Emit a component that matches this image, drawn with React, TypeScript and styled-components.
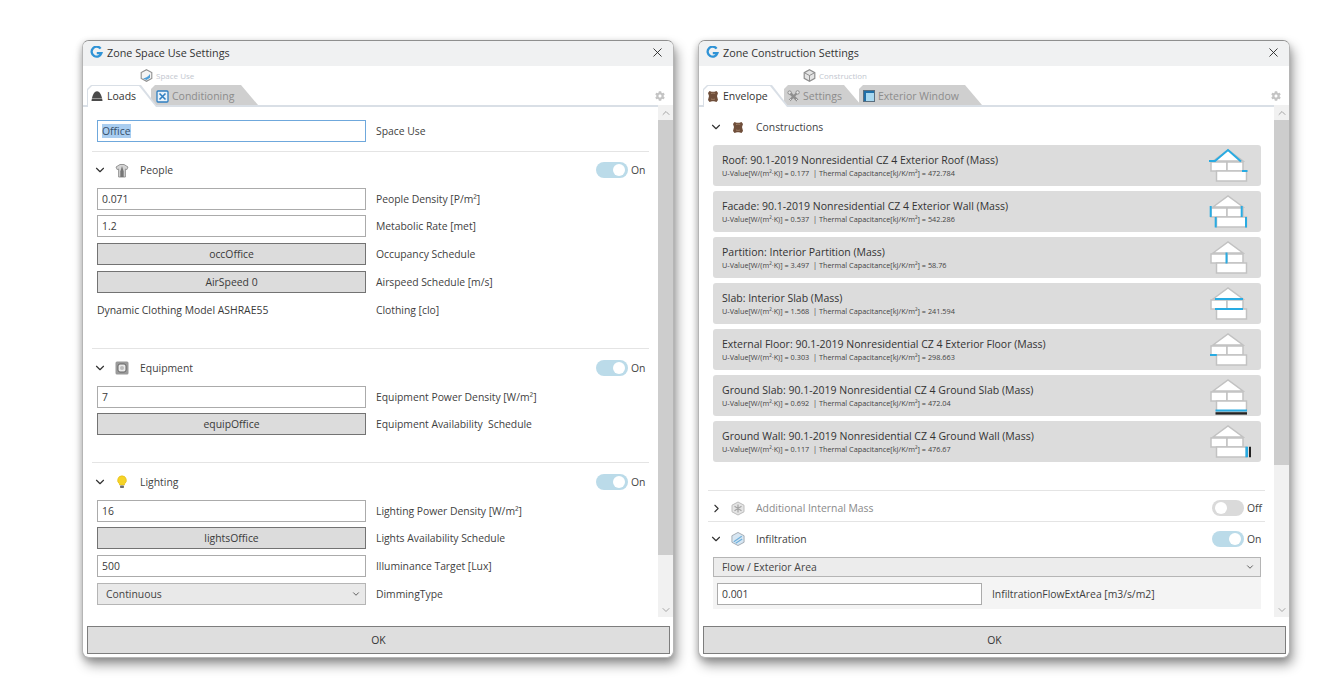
import React from "react";
import styled, { createGlobalStyle } from "styled-components";
import { ChevronDown, ChevronRight, ChevronUp, X } from "lucide-react";
import { FaCog } from "react-icons/fa";

const Global = createGlobalStyle`
  html, body { margin: 0; padding: 0; background: #fff; overflow: hidden; }
  body { font-family: "Open Sans", "Noto Sans", sans-serif; font-size: 10.4px; color: #3a3a3a; }
`;

const Page = styled.div`
  display: flex;
  gap: 24px;
  padding: 40px 0 0 82px;
  height: 656px;
`;
const Win = styled.section`
  width: 592px;
  height: 618px;
  box-sizing: border-box;
  display: flex;
  flex-direction: column;
  background: #fff;
  border: 1px solid #b5b5b5;
  border-top-color: #8f8f8f;
  border-radius: 7px;
  overflow: hidden;
  box-shadow: 3px 7px 12px rgba(0, 0, 0, 0.38), -1px 2px 6px rgba(0, 0, 0, 0.18);
`;
const TitleBar = styled.header`
  height: 25px;
  flex: none;
  display: flex;
  align-items: center;
  gap: 4px;
  padding: 0 8px 2px 7px;
  box-sizing: border-box;
  background: #f0f1f2;
  color: #333;
  font-size: 10.8px;
`;
const CloseBtn = styled.span`
  margin-left: auto;
  display: flex;
  color: #222;
`;
const Strip = styled.div`
  height: 39px;
  flex: none;
  box-sizing: border-box;
  display: flex;
  flex-direction: column;
`;
const Caption = styled.div<{ $left: number }>`
  height: 19px;
  flex: none;
  display: flex;
  align-items: center;
  gap: 3px;
  padding: 0 0 0 ${(p) => p.$left}px;
  box-sizing: border-box;
  font-size: 8px;
  color: #c3c7cf;
`;
const TabRow = styled.div`
  height: 20px;
  display: flex;
  padding: 0 8px 0 4px;
  border-bottom: 2px solid #d9dfe6;
  align-items: flex-start;
`;
const Tab = styled.div<{ $w: number; $active?: boolean; $overlap?: number; $pad: number }>`
  position: relative;
  width: ${(p) => p.$w}px;
  height: 20px;
  box-sizing: border-box;
  margin-left: ${(p) => -(p.$overlap ?? 0)}px;
  padding: 2px 0 0 ${(p) => p.$pad}px;
  display: flex;
  align-items: center;
  gap: ${(p) => (p.$active ? 4 : 3)}px;
  font-size: 10.5px;
  color: ${(p) => (p.$active ? "#333" : "#8c8c8c")};
  z-index: ${(p) => (p.$active ? 2 : 1)};
  isolation: isolate;
  &::before {
    content: "";
    position: absolute;
    inset: 0 0 ${(p) => (p.$active ? -2 : 0)}px 0;
    z-index: -1;
    background: ${(p) => (p.$active ? "#d9dfe6" : "#cfcfcf")};
    clip-path: polygon(0 100%, 0 4px, 4px 0, calc(100% - 17px) 0, 100% 100%);
  }
  &::after {
    content: "";
    display: ${(p) => (p.$active ? "block" : "none")};
    position: absolute;
    inset: 1px 1px -2px 1px;
    z-index: -1;
    background: #fff;
    clip-path: polygon(0 100%, 0 4px, 4px 0, calc(100% - 18px) 0, calc(100% - 1px) 100%);
  }
`;
const GearSlot = styled.span`
  margin-left: auto;
  display: flex;
  align-self: center;
  color: #c4c4c4;
  padding-top: 1px;
`;
const Body = styled.div`
  flex: 1;
  display: flex;
  min-height: 0;
`;
const Content = styled.div`
  flex: 1;
  min-width: 0;
  box-sizing: border-box;
  padding: 0 13px 0 14px;
  display: flex;
  flex-direction: column;
`;
const Scroll = styled.div`
  width: 15px;
  flex: none;
  display: flex;
  flex-direction: column;
  background: #f1f1f1;
  color: #a5a5a5;
`;
const ScrollEnd = styled.div<{ $bottom?: boolean }>`
  height: 15px;
  flex: none;
  display: flex;
  align-items: center;
  justify-content: center;
  margin-top: ${(p) => (p.$bottom ? "auto" : "0")};
`;
const Thumb = styled.div<{ $h: number }>`
  height: ${(p) => p.$h}px;
  flex: none;
  background: #cdcdcd;
`;
const Footer = styled.footer`
  height: 40px;
  flex: none;
  box-sizing: border-box;
  padding: 9px 3px 3px 4px;
  display: flex;
`;
const OkButton = styled.button`
  flex: 1;
  margin: 0;
  padding: 0;
  background: #dedede;
  border: 1.5px solid #7d7d7d;
  font: inherit;
  color: #333;
`;
const Row = styled.div<{ $top?: number }>`
  display: flex;
  align-items: center;
  gap: 10px;
  height: 22px;
  flex: none;
  margin-top: ${(p) => p.$top ?? 6}px;
`;
const FieldBase = styled.div<{ $w?: number }>`
  width: ${(p) => p.$w ?? 269}px;
  height: 22px;
  flex: none;
  box-sizing: border-box;
  display: flex;
  align-items: center;
  padding: 0 4px;
  color: #3a3a3a;
`;
const Field = styled(FieldBase)<{ $focus?: boolean }>`
  background: #fff;
  border: 1px solid ${(p) => (p.$focus ? "#6fa8dc" : "#ababab")};
`;
const Selected = styled.span`
  background: #a9cdf0;
  color: #37506b;
`;
const SchedBtn = styled(FieldBase)`
  justify-content: center;
  background: #dcdcdc;
  border: 1px solid #737373;
`;
const PlainText = styled(FieldBase)`
  padding: 0;
`;
const Combo = styled(FieldBase)`
  background: #e9e9e9;
  border: 1px solid #b5b5b5;
  justify-content: space-between;
  padding: 0 4px 0 8px;
  color: #444;
`;
const WideCombo = styled(Combo)`
  width: 100%;
  height: 20px;
  padding: 0 5px 0 8px;
  margin-top: 8px;
  background: #ececec;
`;
const Label = styled.span`
  color: #3f3f3f;
  white-space: pre;
  letter-spacing: -0.03px;
`;
const Sep = styled.div<{ $top: number }>`
  height: 1px;
  flex: none;
  margin: ${(p) => p.$top}px -4px 0 -5px;
  background: #e4e4e4;
`;
const SectionHead = styled.div<{ $top?: number; $muted?: boolean }>`
  height: 20px;
  flex: none;
  margin-top: ${(p) => p.$top ?? 8}px;
  display: flex;
  align-items: center;
  color: ${(p) => (p.$muted ? "#8a8a8a" : "#3f3f3f")};
`;
const Chevron = styled.span`
  width: 14px;
  margin-left: -4px;
  display: flex;
  justify-content: center;
  color: #333;
`;
const HeadIcon = styled.span`
  width: 14px;
  margin: 0 11px 0 8px;
  display: flex;
  justify-content: center;
`;
const ToggleWrap = styled.span`
  margin-left: auto;
  display: flex;
  align-items: center;
  gap: 3px;
  width: 49px;
  color: #444;
`;
const Track = styled.span<{ $on: boolean }>`
  width: 32px;
  height: 16px;
  border-radius: 8px;
  flex: none;
  box-sizing: border-box;
  padding: 2px 3px;
  display: flex;
  justify-content: ${(p) => (p.$on ? "flex-end" : "flex-start")};
  background: ${(p) => (p.$on ? "#bbdbe9" : "#dadada")};
`;
const Knob = styled.span`
  width: 12px;
  height: 12px;
  border-radius: 50%;
  background: #fff;
`;
const Cards = styled.div`
  display: flex;
  flex-direction: column;
  gap: 5px;
  margin-top: 8px;
`;
const Card = styled.div`
  height: 41px;
  flex: none;
  box-sizing: border-box;
  background: #dcdcdc;
  border-radius: 3px;
  padding: 0 12px 0 9px;
  display: flex;
  align-items: center;
  justify-content: space-between;
`;
const CardText = styled.div`
  display: flex;
  flex-direction: column;
  gap: 2px;
  margin-top: -1px;
`;
const CardTitle = styled.div`
  font-size: 10.5px;
  line-height: 14px;
  color: #333;
  white-space: nowrap;
`;
const CardSub = styled.div`
  font-size: 7.3px;
  line-height: 9px;
  color: #444;
  white-space: pre;
`;
const FlowPanel = styled.div`
  height: 32px;
  flex: none;
  box-sizing: border-box;
  background: #f4f4f4;
  padding: 6px 4px 4px;
  display: flex;
  align-items: center;
  gap: 10px;
`;
const HouseSvg = styled.svg`
  overflow: visible;
  flex: none;
`;

const Logo = () => (
  <svg width="13" height="13" viewBox="0 0 13 13">
    <path d="M10.6 2.6A5 5 0 1 0 11.4 7.2H6.8" fill="none" stroke="#2f93d6" strokeWidth="2.3" />
  </svg>
);
const HexBlue = () => (
  <svg width="13" height="13" viewBox="0 0 13 13">
    <path d="M6.5 .7 11.8 3.6V9.4L6.5 12.3 1.2 9.4V3.6Z" fill="#f4f4f4" stroke="#8f8f8f" strokeWidth="1.1" />
    <path d="M3 9.4C5 9.2 8 8 10 5V8.8L6.5 10.9Z" fill="#4f9fd8" />
  </svg>
);
const HexCube = () => (
  <svg width="13" height="13" viewBox="0 0 13 13">
    <path d="M6.5 .7 11.8 3.6V9.4L6.5 12.3 1.2 9.4V3.6Z" fill="#e4e4e4" stroke="#8f8f8f" strokeWidth="1.2" />
    <path d="M1.5 3.8 6.5 6.5 11.5 3.8M6.5 6.5V12" fill="none" stroke="#8f8f8f" />
  </svg>
);
const LoadsIcon = () => (
  <svg width="12" height="12" viewBox="0 0 12 12">
    <path d="M.5 11C1 6 3 1.2 6 1.2S11 6 11.5 11Z" fill="#4a4a4a" />
    <path d="M1 8.5H11" stroke="#aaa" strokeWidth=".8" />
  </svg>
);
const CondIcon = () => (
  <svg width="13" height="13" viewBox="0 0 13 13">
    <rect x="1" y="1" width="11" height="11" rx="1" fill="#e8f2fa" stroke="#2f7fc1" strokeWidth="1.3" />
    <path d="M3.5 3.5 9.5 9.5M9.5 3.5 3.5 9.5" stroke="#2f7fc1" strokeWidth="1.6" />
  </svg>
);
const HideIcon = () => (
  <svg width="12" height="13" viewBox="0 0 12 13">
    <path d="M2.5 1 4.5 1.8H7.5L9.5 1 11 3 10 6 11 10 9.5 12 7 11.2H5L2.5 12 1 10 2 6 1 3Z" fill="#6f4e3a" />
    <path d="M4 3.5C5.5 3 7 3 8.2 3.6M4 9C5.5 9.5 7 9.5 8 9" stroke="#a98a70" fill="none" strokeWidth=".8" />
  </svg>
);
const ToolsIcon = () => (
  <svg width="13" height="13" viewBox="0 0 13 13" fill="none" stroke="#8e8e8e">
    <path d="M2.5 2.5 10.5 10.5" strokeWidth="2.6" />
    <path d="M10.5 2.5 2.5 10.5" strokeWidth="2.2" />
    <circle cx="2.6" cy="2.6" r="1.7" fill="#e6e6e6" />
    <circle cx="10.6" cy="2.4" r="1.7" fill="#e6e6e6" />
    <path d="M2.2 10.8 4 9M9 9 10.8 10.8" stroke="#dedede" />
  </svg>
);
const WindowIcon = () => (
  <svg width="12" height="12" viewBox="0 0 12 12">
    <rect x=".5" y=".5" width="11" height="11" fill="#1f6fa8" stroke="#5a6f80" />
    <path d="M3 3H11V11H3Z" fill="#a8d8f0" />
  </svg>
);
const ShirtIcon = () => (
  <svg width="14" height="15" viewBox="0 0 14 15">
    <path d="M5 1.5H9L13 4 11.8 6.6 10.4 6V14H3.6V6L2.2 6.6 1 4Z" fill="#d4d4d4" stroke="#8d8d8d" strokeWidth=".9" />
    <path d="M5.3 8.5 7 3 8.7 8.5V14H5.3Z" fill="#777" />
  </svg>
);
const EquipIcon = () => (
  <svg width="14" height="14" viewBox="0 0 14 14">
    <rect x=".5" y=".5" width="13" height="13" rx="1.5" fill="#9a9a9a" />
    <rect x="3" y="3" width="8" height="8" rx="2" fill="#e9e9e9" stroke="#666" />
    <circle cx="7" cy="7" r="2" fill="#bbb" />
  </svg>
);
const BulbIcon = () => (
  <svg width="12" height="14" viewBox="0 0 12 14">
    <path d="M6 .8A4.4 4.4 0 0 1 8.5 8.8V10H3.5V8.8A4.4 4.4 0 0 1 6 .8Z" fill="#f5d327" stroke="#e2b90e" strokeWidth=".6" />
    <rect x="4" y="10.5" width="4" height="2.6" rx=".8" fill="#6e6e6e" />
  </svg>
);
const MassIcon = () => (
  <svg width="14" height="15" viewBox="0 0 14 15">
    <path d="M7 1 13 4.2V10.8L7 14 1 10.8V4.2Z" fill="#e4e4e4" stroke="#bdbdbd" />
    <path d="M7 3.5V11.5M3.5 5.2 10.5 9.8M10.5 5.2 3.5 9.8" stroke="#a5a5a5" strokeWidth="1.2" />
  </svg>
);
const InfilIcon = () => (
  <svg width="15" height="16" viewBox="0 0 15 16">
    <path d="M7.5 1 14 4.5V11.5L7.5 15 1 11.5V4.5Z" fill="#d7e6f2" stroke="#a0a8b0" />
    <path d="M3 11 11.5 5M5 12.5 12 8" stroke="#6fb0dc" strokeWidth="1.3" />
  </svg>
);

type Mark = { d: string; color?: string; w?: number };
const BLUE = "#29abe2";
const House = ({ marks }: { marks: Mark[] }) => (
  <HouseSvg width="40" height="35" viewBox="0 0 40 35">
    <g fill="#fff" stroke="#c2c2c2" strokeWidth="1.5">
      <path d="M4 13 19 2 34 13Z" />
      <rect x="2" y="14" width="16" height="9" />
      <rect x="18" y="14" width="16" height="9" />
      <rect x="7.5" y="23" width="30" height="10" />
    </g>
    {marks.map((m, i) => (
      <path key={i} d={m.d} fill="none" stroke={m.color ?? BLUE} strokeWidth={m.w ?? 2} />
    ))}
  </HouseSvg>
);

const cards: { t: string; u: string; c: string; marks: Mark[] }[] = [
  { t: "Roof: 90.1-2019 Nonresidential CZ 4 Exterior Roof (Mass)", u: "0.177", c: "472.784", marks: [{ d: "M0 13H6L19 2 32 13.5" }, { d: "M33 23H38.5" }] },
  { t: "Facade: 90.1-2019 Nonresidential CZ 4 Exterior Wall (Mass)", u: "0.537", c: "542.286", marks: [{ d: "M1.7 12V23M32.7 12V23M6.7 23V33.5M37 23V33.5" }] },
  { t: "Partition: Interior Partition (Mass)", u: "3.497", c: "58.76", marks: [{ d: "M17.5 12.5V23.5" }] },
  { t: "Slab: Interior Slab (Mass)", u: "1.568", c: "241.594", marks: [{ d: "M6 13H34M6 23H34" }] },
  { t: "External Floor: 90.1-2019 Nonresidential CZ 4 Exterior Floor (Mass)", u: "0.303", c: "298.663", marks: [{ d: "M1 23H7.8" }] },
  { t: "Ground Slab: 90.1-2019 Nonresidential CZ 4 Ground Slab (Mass)", u: "0.692", c: "472.04", marks: [{ d: "M6.5 32.5H38" }, { d: "M6.5 35.4H38", color: "#222", w: 2.4 }] },
  { t: "Ground Wall: 90.1-2019 Nonresidential CZ 4 Ground Wall (Mass)", u: "0.117", c: "476.67", marks: [{ d: "M37.7 22.7V33.3", w: 2.6 }, { d: "M41 22.7V33.3", color: "#222", w: 2 }] },
];

const Toggle = ({ on }: { on: boolean }) => (
  <ToggleWrap>
    <Track $on={on}>
      <Knob />
    </Track>
    {on ? "On" : "Off"}
  </ToggleWrap>
);

const Head = ({ icon, label, on, top, collapsed, muted }: { icon: React.ReactNode; label: string; on: boolean; top?: number; collapsed?: boolean; muted?: boolean }) => (
  <SectionHead $top={top} $muted={muted}>
    <Chevron>{collapsed ? <ChevronRight size={13} /> : <ChevronDown size={14} />}</Chevron>
    <HeadIcon>{icon}</HeadIcon>
    {label}
    <Toggle on={on} />
  </SectionHead>
);

const Bar = ({ thumb }: { thumb: number }) => (
  <Scroll>
    <ScrollEnd>
      <ChevronUp size={12} />
    </ScrollEnd>
    <Thumb $h={thumb} />
    <ScrollEnd $bottom>
      <ChevronDown size={12} />
    </ScrollEnd>
  </Scroll>
);

const Window = ({ title, caption, captionLeft, captionIcon, tabs, thumb, children }: { title: string; caption: string; captionLeft: number; captionIcon: React.ReactNode; tabs: React.ReactNode; thumb: number; children: React.ReactNode }) => (
  <Win>
    <TitleBar>
      <Logo />
      {title}
      <CloseBtn>
        <X size={15} strokeWidth={1.4} />
      </CloseBtn>
    </TitleBar>
    <Strip>
      <Caption $left={captionLeft}>
        {captionIcon}
        {caption}
      </Caption>
      <TabRow>
        {tabs}
        <GearSlot>
          <FaCog size={10} />
        </GearSlot>
      </TabRow>
    </Strip>
    <Body>
      <Content>{children}</Content>
      <Bar thumb={thumb} />
    </Body>
    <Footer>
      <OkButton>OK</OkButton>
    </Footer>
  </Win>
);

export default function App() {
  return (
    <>
      <Global />
      <Page>
        <Window
          title="Zone Space Use Settings"
          caption="Space Use"
          captionLeft={57}
          captionIcon={<HexBlue />}
          thumb={435}
          tabs={
            <>
              <Tab $w={71} $active $pad={4}>
                <LoadsIcon />
                Loads
              </Tab>
              <Tab $w={107} $overlap={7} $pad={5}>
                <CondIcon />
                Conditioning
              </Tab>
            </>
          }
        >
          <Row $top={15}>
            <Field $focus>
              <Selected>Office</Selected>
            </Field>
            <Label>Space Use</Label>
          </Row>
          <Sep $top={9} />
          <Head icon={<ShirtIcon />} label="People" on />
          <Row $top={8}>
            <Field>0.071</Field>
            <Label>People Density [P/m²]</Label>
          </Row>
          <Row $top={5}>
            <Field>1.2</Field>
            <Label>Metabolic Rate [met]</Label>
          </Row>
          <Row $top={6}>
            <SchedBtn>occOffice</SchedBtn>
            <Label>Occupancy Schedule</Label>
          </Row>
          <Row>
            <SchedBtn>AirSpeed 0</SchedBtn>
            <Label>Airspeed Schedule [m/s]</Label>
          </Row>
          <Row>
            <PlainText>Dynamic Clothing Model ASHRAE55</PlainText>
            <Label>Clothing [clo]</Label>
          </Row>
          <Sep $top={27} />
          <Head icon={<EquipIcon />} label="Equipment" on top={9} />
          <Row $top={8}>
            <Field>7</Field>
            <Label>Equipment Power Density [W/m²]</Label>
          </Row>
          <Row $top={5}>
            <SchedBtn>equipOffice</SchedBtn>
            <Label>Equipment Availability  Schedule</Label>
          </Row>
          <Sep $top={27} />
          <Head icon={<BulbIcon />} label="Lighting" on top={9} />
          <Row $top={8}>
            <Field>16</Field>
            <Label>Lighting Power Density [W/m²]</Label>
          </Row>
          <Row $top={5}>
            <SchedBtn>lightsOffice</SchedBtn>
            <Label>Lights Availability Schedule</Label>
          </Row>
          <Row>
            <Field>500</Field>
            <Label>Illuminance Target [Lux]</Label>
          </Row>
          <Row>
            <Combo>
              Continuous
              <ChevronDown size={10} />
            </Combo>
            <Label>DimmingType</Label>
          </Row>
        </Window>
        <Window
          title="Zone Construction Settings"
          caption="Construction"
          captionLeft={104}
          captionIcon={<HexCube />}
          thumb={345}
          tabs={
            <>
              <Tab $w={86} $active $pad={4}>
                <HideIcon />
                Envelope
              </Tab>
              <Tab $w={77} $overlap={5} $pad={3}>
                <ToolsIcon />
                Settings
              </Tab>
              <Tab $w={123} $overlap={2} $pad={4}>
                <WindowIcon />
                Exterior Window
              </Tab>
            </>
          }
        >
          <SectionHead $top={12}>
            <Chevron>
              <ChevronDown size={14} />
            </Chevron>
            <HeadIcon>
              <HideIcon />
            </HeadIcon>
            Constructions
          </SectionHead>
          <Cards>
            {cards.map((c) => (
              <Card key={c.t}>
                <CardText>
                  <CardTitle>{c.t}</CardTitle>
                  <CardSub>{`U-Value[W/(m²·K)] = ${c.u}  | Thermal Capacitance[kJ/K/m²] = ${c.c}`}</CardSub>
                </CardText>
                <House marks={c.marks} />
              </Card>
            ))}
          </Cards>
          <Sep $top={28} />
          <Head icon={<MassIcon />} label="Additional Internal Mass" on={false} collapsed muted top={7} />
          <Sep $top={3} />
          <Head icon={<InfilIcon />} label="Infiltration" on top={7} />
          <WideCombo>
            Flow / Exterior Area
            <ChevronDown size={10} />
          </WideCombo>
          <FlowPanel>
            <Field $w={265}>0.001</Field>
            <Label>InfiltrationFlowExtArea [m3/s/m2]</Label>
          </FlowPanel>
        </Window>
      </Page>
    </>
  );
}
